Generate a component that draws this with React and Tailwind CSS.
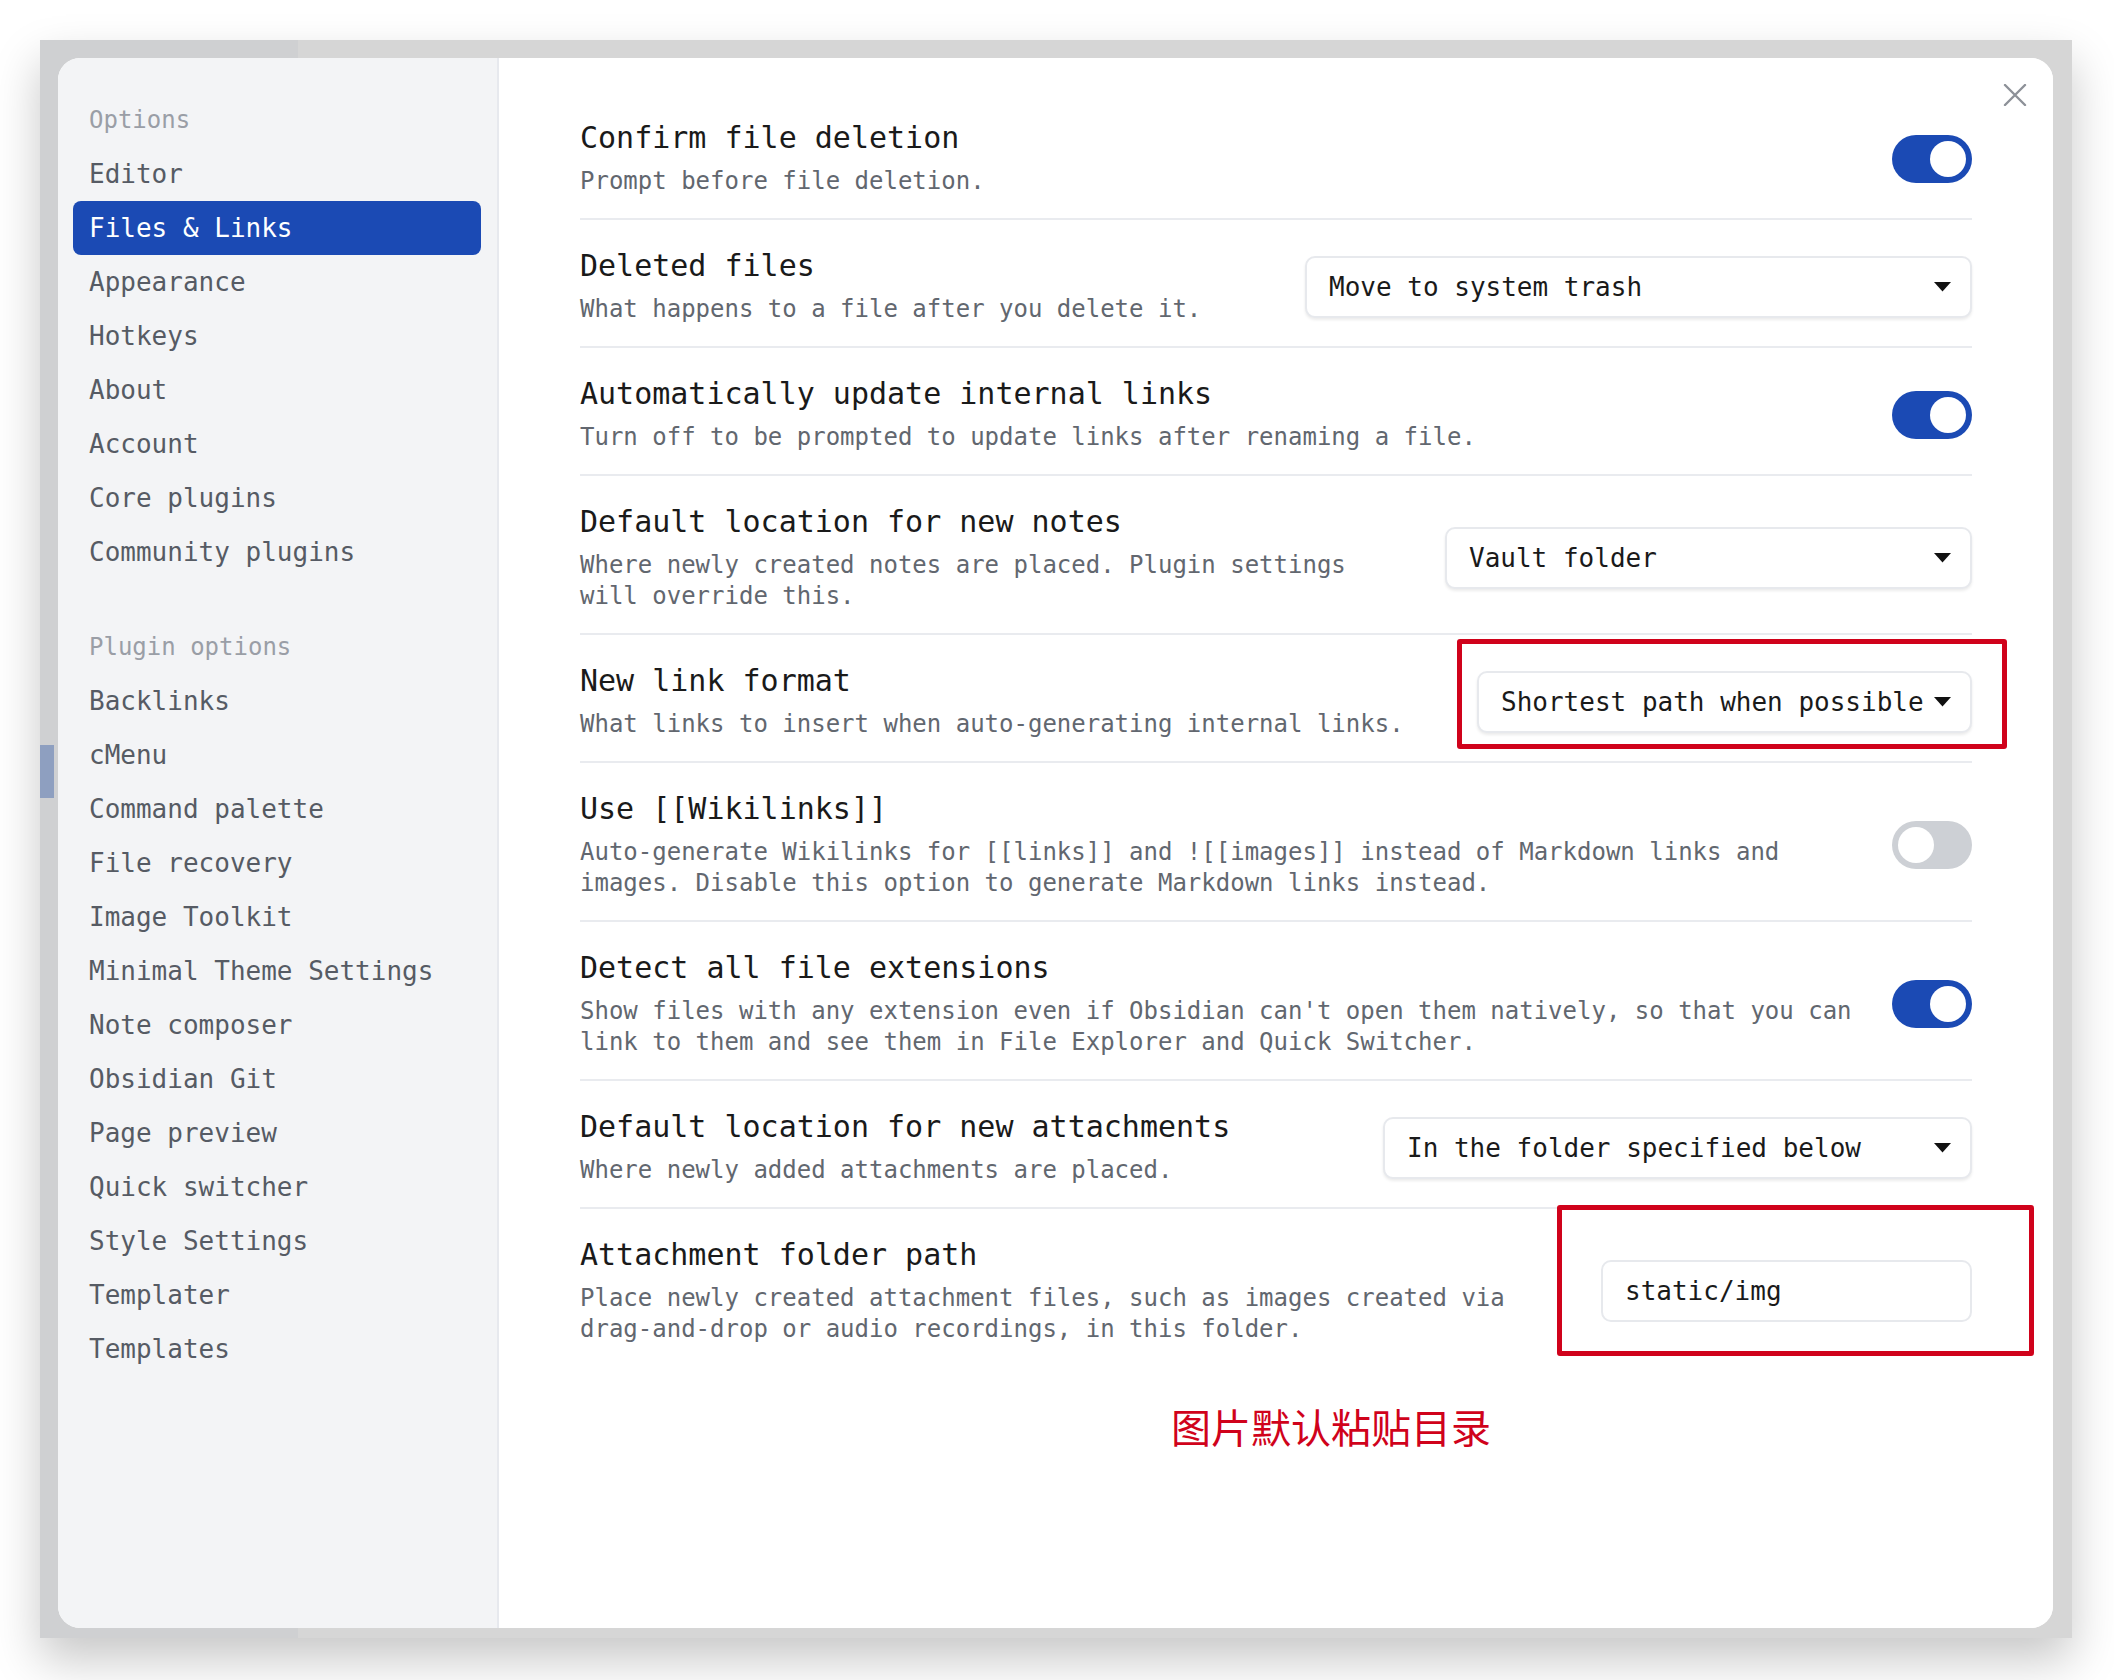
import React from "react";

// Obsidian settings dialog – "Files & Links" tab, with two red annotation boxes

const MONO = "font-['DejaVu_Sans_Mono','Noto_Sans_Mono_CJK_SC',monospace]";

const CORE = [
  "Editor",
  "Files & Links",
  "Appearance",
  "Hotkeys",
  "About",
  "Account",
  "Core plugins",
  "Community plugins",
];

const PLUGINS = [
  "Backlinks",
  "cMenu",
  "Command palette",
  "File recovery",
  "Image Toolkit",
  "Minimal Theme Settings",
  "Note composer",
  "Obsidian Git",
  "Page preview",
  "Quick switcher",
  "Style Settings",
  "Templater",
  "Templates",
];

const ROWS = [
  {
    title: "Confirm file deletion",
    desc: "Prompt before file deletion.",
    control: { type: "toggle", on: true },
  },
  {
    title: "Deleted files",
    desc: "What happens to a file after you delete it.",
    control: { type: "select", value: "Move to system trash", width: "w-[667px]" },
  },
  {
    title: "Automatically update internal links",
    desc: "Turn off to be prompted to update links after renaming a file.",
    control: { type: "toggle", on: true },
  },
  {
    title: "Default location for new notes",
    desc: "Where newly created notes are placed. Plugin settings will override this.",
    control: { type: "select", value: "Vault folder", width: "w-[527px]" },
  },
  {
    title: "New link format",
    desc: "What links to insert when auto-generating internal links.",
    control: { type: "select", value: "Shortest path when possible", width: "w-[495px]" },
    mark: "select",
  },
  {
    title: "Use [[Wikilinks]]",
    desc: "Auto-generate Wikilinks for [[links]] and ![[images]] instead of Markdown links and images. Disable this option to generate Markdown links instead.",
    control: { type: "toggle", on: false },
  },
  {
    title: "Detect all file extensions",
    desc: "Show files with any extension even if Obsidian can't open them natively, so that you can link to them and see them in File Explorer and Quick Switcher.",
    control: { type: "toggle", on: true },
  },
  {
    title: "Default location for new attachments",
    desc: "Where newly added attachments are placed.",
    control: { type: "select", value: "In the folder specified below", width: "w-[589px]" },
  },
  {
    title: "Attachment folder path",
    desc: "Place newly created attachment files, such as images created via drag-and-drop or audio recordings, in this folder.",
    control: { type: "input", value: "static/img", width: "w-[371px]" },
    mark: "input",
  },
];

function Toggle({ on }) {
  return (
    <div
      className={`w-[80px] h-[48px] rounded-full p-[6px] flex items-center ${
        on ? "bg-[#1b4ab4] justify-end" : "bg-[#cdd0d5] justify-start"
      }`}
    >
      <div className="w-[36px] h-[36px] rounded-full bg-white" />
    </div>
  );
}

function Select({ value, width }) {
  return (
    <div
      className={`${width} h-[62px] flex items-center justify-between pl-[22px] pr-[19px] rounded-[10px]
                  bg-white border-2 border-[#e7e9ed] shadow-[0_2px_3px_rgba(0,0,0,0.08)]`}
    >
      <span className="text-[26px] leading-none text-[#1a1a1a]">{value}</span>
      <svg width="17" height="10" viewBox="0 0 17 10">
        <polygon points="0,0 17,0 8.5,9.5" fill="#111" />
      </svg>
    </div>
  );
}

function TextInput({ value, width }) {
  return (
    <div
      className={`${width} h-[62px] flex items-center pl-[22px] rounded-[10px] bg-white border-2 border-[#e7e9ed]`}
    >
      <span className="text-[26px] leading-none text-[#1a1a1a]">{value}</span>
    </div>
  );
}

function Control({ control }) {
  if (control.type === "toggle") return <Toggle on={control.on} />;
  if (control.type === "select") return <Select value={control.value} width={control.width} />;
  return <TextInput value={control.value} width={control.width} />;
}

function SettingRow({ row, last }) {
  return (
    <div
      className={`flex items-center pt-[28px] ${
        last ? "pb-[23px]" : "pb-[21px] border-b-2 border-[#e9ebef]"
      }`}
    >
      <div className="flex-1 min-w-0 pr-[34px]">
        <div className="text-[30px] leading-[36px] text-[#1a1a1a]">{row.title}</div>
        <div className="mt-[10px] text-[24px] leading-[31px] text-[#62676f]">{row.desc}</div>
      </div>
      <div className="shrink-0 relative">
        <Control control={row.control} />
        {/* 紅框標註 */}
        {row.mark === "select" && (
          <div className="absolute -left-[20px] -right-[35px] -top-[32px] -bottom-[16px] border-[5px] border-[#d0021b] rounded-[3px] pointer-events-none" />
        )}
        {row.mark === "input" && (
          <div className="absolute -left-[44px] -right-[62px] -top-[55px] -bottom-[34px] border-[5px] border-[#d0021b] rounded-[3px] pointer-events-none" />
        )}
      </div>
    </div>
  );
}

function SidebarItem({ label, active }) {
  return (
    <div
      className={`h-[54px] flex items-center pl-[16px] rounded-[8px] text-[26px] ${
        active ? "bg-[#1b4ab4] text-white" : "text-[#565b64]"
      }`}
    >
      {label}
    </div>
  );
}

function Sidebar() {
  return (
    <aside className="w-[441px] shrink-0 bg-[#f3f4f6] border-r-2 border-[#e7e9ee] pt-[35px] pl-[15px] pr-[16px]">
      <div className="h-[54px] flex items-center pl-[16px] text-[24px] text-[#9a9ea6]">Options</div>
      {CORE.map((label) => (
        <SidebarItem key={label} label={label} active={label === "Files & Links"} />
      ))}
      <div className="mt-[41px] h-[54px] flex items-center pl-[16px] text-[24px] text-[#9a9ea6]">
        Plugin options
      </div>
      {PLUGINS.map((label) => (
        <SidebarItem key={label} label={label} />
      ))}
    </aside>
  );
}

export default function App() {
  return (
    <div className={`w-[2114px] h-[1680px] bg-white p-[40px] ${MONO}`}>
      {/* 背後的 app 視窗 */}
      <div className="w-[2032px] h-[1598px] flex flex-col bg-[linear-gradient(to_right,#cfd0d2_258px,#d6d6d6_258px)] shadow-[0_22px_44px_rgba(0,0,0,0.22)]">
        <div className="h-[18px] shrink-0" />
        <div className="flex flex-1 min-h-0">
          <div className="w-[18px] shrink-0">
            <div className="mt-[687px] w-[14px] h-[53px] bg-[#8e9fc0]" />
          </div>

          {/* ========== 設定對話框 ========== */}
          <div className="flex-1 flex rounded-[22px] overflow-hidden bg-white">
            <Sidebar />

            <main className="flex-1 relative bg-white pt-[34px] pl-[81px] pr-[81px]">
              <svg
                className="absolute top-[26px] right-[26px]"
                width="24"
                height="22"
                viewBox="0 0 24 22"
              >
                <path d="M2 1 L22 21 M22 1 L2 21" stroke="#8d9198" strokeWidth="2.4" strokeLinecap="round" />
              </svg>

              {ROWS.map((row, i) => (
                <SettingRow key={row.title} row={row} last={i === ROWS.length - 1} />
              ))}

              <div className="mt-[38px] pl-[591px] text-[40px] leading-[40px] text-[#d0021b] font-['Noto_Sans_CJK_SC',sans-serif]">
                图片默认粘贴目录
              </div>
            </main>
          </div>

          <div className="w-[19px] shrink-0" />
        </div>
        <div className="h-[10px] shrink-0" />
      </div>
    </div>
  );
}
